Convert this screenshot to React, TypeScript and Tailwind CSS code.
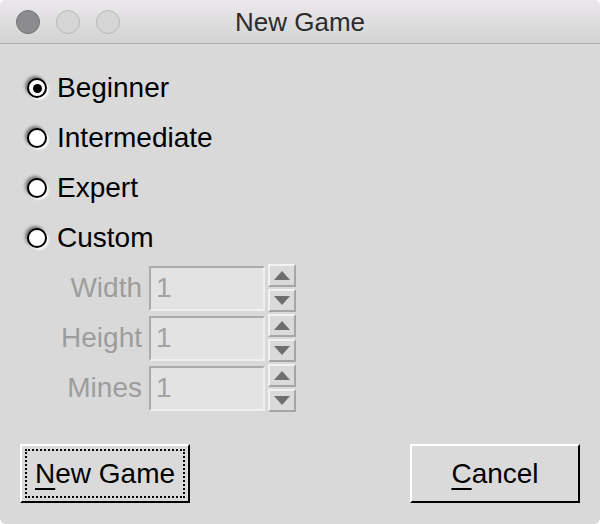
import React from 'react'

const font = { fontFamily: '"Liberation Sans", Arial, sans-serif' }

function Radio({ label, checked }: { label: string; checked?: boolean }) {
  return (
    <div className="flex h-[50px] items-center gap-[10px] pl-[27px]">
      <div className="flex h-[20px] w-[20px] items-center justify-center rounded-full border-2 border-black bg-white shadow-[-2px_-2px_3px_rgba(0,0,0,0.45),2px_2px_2px_rgba(255,255,255,0.9)]">
        {checked && <div className="h-[9px] w-[9px] rounded-full bg-black" />}
      </div>
      <span className="text-[28px] leading-none text-black">{label}</span>
    </div>
  )
}

function Spin() {
  return (
    <div className="flex flex-col gap-[2px]">
      <div className="flex h-[23px] w-[28px] items-center justify-center border-2 border-t-[#f2f2f2] border-l-[#f2f2f2] border-b-[#a6a6a6] border-r-[#a6a6a6] bg-[#dadada]">
        <svg width="16" height="9" viewBox="0 0 16 9">
          <polygon points="8,0 16,9 0,9" fill="#6e6e6e" />
        </svg>
      </div>
      <div className="flex h-[23px] w-[28px] items-center justify-center border-2 border-t-[#f2f2f2] border-l-[#f2f2f2] border-b-[#a6a6a6] border-r-[#a6a6a6] bg-[#dadada]">
        <svg width="16" height="9" viewBox="0 0 16 9">
          <polygon points="0,0 16,0 8,9" fill="#6e6e6e" />
        </svg>
      </div>
    </div>
  )
}

function Field({ label }: { label: string }) {
  return (
    <div className="flex h-[50px] items-center">
      <span className="w-[143px] pr-[1px] text-right text-[28px] leading-none text-[#9d9d9d]">{label}</span>
      <div className="ml-[6px] flex h-[45px] w-[116px] items-center border-2 border-t-[#ababab] border-l-[#ababab] border-b-[#efefef] border-r-[#efefef] bg-[#e3e3e3] pl-[5px]">
        <span className="text-[28px] leading-none text-[#a2a2a2]">1</span>
      </div>
      <div className="ml-[3px]">
        <Spin />
      </div>
    </div>
  )
}

function Button({ first, rest, focus }: { first: string; rest: string; focus?: boolean }) {
  return (
    <div className="h-[59px] w-[170px] border-2 border-t-white border-l-white border-b-black border-r-black bg-[#dadada] p-[3px]">
      <div
        className={`flex h-full w-full items-center justify-center border-2 ${
          focus ? 'border-dotted border-black' : 'border-transparent'
        }`}
      >
        <span className="text-[28px] leading-none text-black">
          <span className="underline decoration-[2px] underline-offset-[5px]">{first}</span>
          {rest}
        </span>
      </div>
    </div>
  )
}

export default function App() {
  return (
    <div className="h-[524px] w-[600px] bg-white" style={font}>
      <div className="flex h-full flex-col overflow-hidden rounded-[6px] bg-[#d9d9d9]">
        <div className="grid h-[44px] grid-cols-[1fr_auto_1fr] items-center border-b border-[#b1b1b1] bg-gradient-to-b from-[#ebe9eb] to-[#d4d3d4]">
          <div className="flex gap-[16px] pl-[16px]">
            <div className="h-[24px] w-[24px] rounded-full border border-[#747375] bg-[#8c8b8d]" />
            <div className="h-[24px] w-[24px] rounded-full border border-[#b8b8b8] bg-[#d6d6d6]" />
            <div className="h-[24px] w-[24px] rounded-full border border-[#b8b8b8] bg-[#d6d6d6]" />
          </div>
          <span className="text-[26px] leading-none text-[#2c2c2c]">New Game</span>
          <div />
        </div>

        <div className="pt-[19px]">
          <Radio label="Beginner" checked />
          <Radio label="Intermediate" />
          <Radio label="Expert" />
          <Radio label="Custom" />
          <Field label="Width" />
          <Field label="Height" />
          <Field label="Mines" />
        </div>

        <div className="mt-[31px] flex justify-between px-[20px]">
          <Button first="N" rest="ew Game" focus />
          <Button first="C" rest="ancel" />
        </div>
      </div>
    </div>
  )
}
